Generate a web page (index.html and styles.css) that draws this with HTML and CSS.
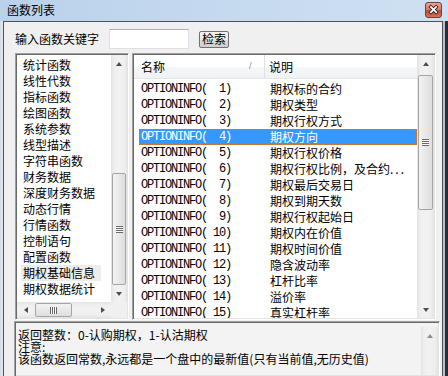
FILE: index.html
```html
<!DOCTYPE html>
<html>
<head>
<meta charset="utf-8">
<title>函数列表</title>
<link rel="stylesheet" href="styles.css">
</head>
<body>
<div class="window">
  <div class="titlebar">
    <span class="title">函数列表</span>
    <div class="close-btn">
      <svg width="17" height="16" viewBox="0 0 17 16">
        <path d="M5.5 4.5 L11.5 10.5 M11.5 4.5 L5.5 10.5" stroke="#3b2320" stroke-width="4" stroke-linecap="square"/>
        <path d="M5.5 4.5 L11.5 10.5 M11.5 4.5 L5.5 10.5" stroke="#ffffff" stroke-width="2" stroke-linecap="square"/>
      </svg>
    </div>
  </div>

  <div class="client">
    <div class="search-row">
      <span class="search-label">输入函数关键字</span>
      <input class="search-input" type="text">
      <button class="search-btn">检索</button>
    </div>

    <div class="panes">
      <!-- category list -->
      <div class="cat-box">
        <div class="cat-main">
          <ul class="cat-list">
            <li><span>统计函数</span></li>
            <li><span>线性代数</span></li>
            <li><span>指标函数</span></li>
            <li><span>绘图函数</span></li>
            <li><span>系统参数</span></li>
            <li><span>线型描述</span></li>
            <li><span>字符串函数</span></li>
            <li><span>财务数据</span></li>
            <li><span>深度财务数据</span></li>
            <li><span>动态行情</span></li>
            <li><span>行情函数</span></li>
            <li><span>控制语句</span></li>
            <li><span>配置函数</span></li>
            <li><span class="current">期权基础信息</span></li>
            <li><span>期权数据统计</span></li>
          </ul>
          <div class="vscroll cat-vscroll">
            <div class="sb-btn"><i class="arrow-up"></i></div>
            <div class="sb-track">
              <div class="thumb-v"><i class="grip-v"></i></div>
            </div>
            <div class="sb-btn"><i class="arrow-down"></i></div>
          </div>
        </div>
        <div class="cat-bottom">
          <div class="hscroll">
            <div class="sb-btn-h"><i class="arrow-left"></i></div>
            <div class="sb-track-h">
              <div class="thumb-h"><i class="grip-h"></i></div>
            </div>
            <div class="sb-btn-h"><i class="arrow-right"></i></div>
          </div>
          <div class="corner"></div>
        </div>
      </div>

      <!-- function list -->
      <div class="func-box">
        <div class="func-view">
          <div class="func-header">
            <div class="hd-name">名称<span class="sort-mark">/</span></div>
            <div class="hd-desc">说明</div>
          </div>
          <div class="func-rows">
            <div class="row"><span class="c-name">OPTIONINFO(  1)</span><span class="c-desc">期权标的合约</span></div>
            <div class="row"><span class="c-name">OPTIONINFO(  2)</span><span class="c-desc">期权类型</span></div>
            <div class="row"><span class="c-name">OPTIONINFO(  3)</span><span class="c-desc">期权行权方式</span></div>
            <div class="row selected"><span class="c-name">OPTIONINFO(  4)</span><span class="c-desc">期权方向</span></div>
            <div class="row"><span class="c-name">OPTIONINFO(  5)</span><span class="c-desc">期权行权价格</span></div>
            <div class="row"><span class="c-name">OPTIONINFO(  6)</span><span class="c-desc">期权行权比例，及合约<span class="dots">...</span></span></div>
            <div class="row"><span class="c-name">OPTIONINFO(  7)</span><span class="c-desc">期权最后交易日</span></div>
            <div class="row"><span class="c-name">OPTIONINFO(  8)</span><span class="c-desc">期权到期天数</span></div>
            <div class="row"><span class="c-name">OPTIONINFO(  9)</span><span class="c-desc">期权行权起始日</span></div>
            <div class="row"><span class="c-name">OPTIONINFO( 10)</span><span class="c-desc">期权内在价值</span></div>
            <div class="row"><span class="c-name">OPTIONINFO( 11)</span><span class="c-desc">期权时间价值</span></div>
            <div class="row"><span class="c-name">OPTIONINFO( 12)</span><span class="c-desc">隐含波动率</span></div>
            <div class="row"><span class="c-name">OPTIONINFO( 13)</span><span class="c-desc">杠杆比率</span></div>
            <div class="row"><span class="c-name">OPTIONINFO( 14)</span><span class="c-desc">溢价率</span></div>
            <div class="row"><span class="c-name">OPTIONINFO( 15)</span><span class="c-desc">真实杠杆率</span></div>
          </div>
        </div>
        <div class="vscroll func-vscroll">
          <div class="sb-btn"><i class="arrow-up"></i></div>
          <div class="sb-track">
            <div class="thumb-v"><i class="grip-v"></i></div>
          </div>
          <div class="sb-btn"><i class="arrow-down"></i></div>
        </div>
      </div>
    </div>

    <!-- description -->
    <div class="desc-box">
      <div class="desc-text">
        <div>返回整数：0-认购期权，1-认沽期权</div>
        <div>注意:</div>
        <div>该函数返回常数,永远都是一个盘中的最新值(只有当前值,无历史值)</div>
      </div>
      <div class="vscroll desc-vscroll">
        <div class="sb-btn"><i class="arrow-up light"></i></div>
        <div class="sb-track plain"></div>
      </div>
    </div>
  </div>
</div>
</body>
</html>
```

FILE: styles.css
```css
html, body {
  margin: 0;
  padding: 0;
}

body {
  width: 448px;
  height: 376px;
  overflow: hidden;
  font-family: "Noto Sans CJK SC", "Liberation Sans", sans-serif;
  font-size: 12px;
  color: #000;
  background: #2b2f35;
}

.window {
  width: 443px;
  height: 376px;
  display: flex;
  flex-direction: column;
  background: linear-gradient(to right, #d3dbe3, #dfe5eb 2px, #c9d3dd);
  border-right: 2px solid #b7c2cc;
}

/* title bar */

.titlebar {
  height: 21px;
  flex: none;
  display: flex;
  align-items: center;
  justify-content: space-between;
  padding: 0 6px 0 7px;
  background: linear-gradient(to right, #b9d1ea, #c4d9ef 45%, #cfe0f2);
  margin-right: -5px;
}

.title {
  line-height: 14px;
  margin-top: -1px;
}

.close-btn {
  width: 17px;
  height: 16px;
  margin-top: -1px;
  border: 1px solid #7a3b33;
  border-radius: 3px;
  background: linear-gradient(to bottom, #e8a596, #d7806f 45%, #c24a35 55%, #d0735e);
  box-sizing: border-box;
  display: flex;
  align-items: center;
  justify-content: center;
}

.close-btn svg {
  display: block;
  margin-top: -1px;
}

/* client area */

.client {
  flex: 1;
  margin-left: 3px;
  border: 1px solid #4e5258;
  border-bottom: none;
  background: #f0f0f0;
  display: flex;
  flex-direction: column;
  min-height: 0;
}

.search-row {
  display: flex;
  align-items: center;
  height: 20px;
  margin-top: 7px;
  padding-left: 11px;
}

.search-label {
  line-height: 14px;
}

.search-input {
  width: 80px;
  height: 20px;
  box-sizing: border-box;
  margin: 0 0 0 10px;
  padding: 0;
  border: 1px solid #dbdfe6;
  border-top-color: #abadb3;
  background: #fff;
}

.search-btn {
  width: 30px;
  height: 17px;
  margin-left: 10px;
  padding: 0;
  box-sizing: border-box;
  border: 1px solid #707070;
  border-radius: 2px;
  background: linear-gradient(to bottom, #f2f2f2, #ebebeb 50%, #dddddd 51%, #cfcfcf);
  font-family: "Noto Sans CJK SC", sans-serif;
  font-size: 12px;
  line-height: 14px;
  color: #000;
}

.panes {
  display: flex;
  margin-top: 4px;
  padding-left: 11px;
  height: 267px;
  flex: none;
}

/* sunken boxes */

.cat-box,
.func-box,
.desc-box {
  box-sizing: border-box;
  border: 1px solid;
  border-color: #a0a0a0 #ffffff #ffffff #a0a0a0;
  box-shadow: inset 1px 1px 0 #696969, inset -1px -1px 0 #e3e3e3;
  background: #fff;
}

.cat-box {
  width: 114px;
  height: 100%;
  padding: 1px;
  display: flex;
  flex-direction: column;
}

.cat-main {
  flex: 1;
  display: flex;
  min-height: 0;
}

.cat-list {
  flex: 1;
  list-style: none;
  margin: 0;
  padding: 2px 0 0 4px;
  overflow: hidden;
}

.cat-list li {
  height: 16px;
  line-height: 16px;
  white-space: nowrap;
}

.cat-list span {
  display: inline-block;
  padding: 0 6px 0 2px;
}

.cat-list .current {
  background: #ececec;
}

.cat-bottom {
  height: 16px;
  display: flex;
  flex: none;
}

.corner {
  width: 16px;
  background: #f0f0f0;
}

.func-box {
  width: 304px;
  height: 100%;
  margin-left: 3px;
  padding: 1px;
  display: flex;
}

.func-view {
  flex: 1;
  overflow: hidden;
}

.func-header {
  display: flex;
  height: 24px;
  box-sizing: border-box;
  border-bottom: 1px solid #e5e5e5;
  background: linear-gradient(to bottom, #ffffff, #ffffff 50%, #f5f6f7 51%, #f1f2f4);
  line-height: 23px;
}

.hd-name {
  width: 131px;
  box-sizing: border-box;
  padding-left: 7px;
  border-right: 1px solid #dde0e4;
  position: relative;
}

.sort-mark {
  position: absolute;
  left: 115px;
  top: 0;
  font-family: "Liberation Sans", sans-serif;
  font-size: 9px;
  color: #8a8a8a;
}

.hd-desc {
  flex: 1;
  padding-left: 4px;
}

.func-rows {
  padding-top: 2px;
}

.row {
  display: flex;
  height: 16px;
  line-height: 16px;
  margin-left: 5px;
  box-sizing: border-box;
  white-space: nowrap;
}

.row.selected {
  background: #3399ff;
  color: #fff;
  outline: 1px dotted #c87a36;
  outline-offset: -1px;
}

.c-name {
  width: 131px;
  flex: none;
  padding-left: 2px;
  box-sizing: border-box;
  font-family: "Liberation Mono", monospace;
  font-size: 12px;
  letter-spacing: -1.2px;
  white-space: pre;
}

.c-desc {
  flex: 1;
}

.dots {
  letter-spacing: 2px;
}

/* scrollbars */

.vscroll {
  width: 17px;
  flex: none;
  display: flex;
  flex-direction: column;
  background: linear-gradient(to right, #e3e3e3, #eeeeee 3px, #f2f2f2 50%, #eeeeee 14px, #e3e3e3);
}

.cat-vscroll {
  width: 16px;
}

.sb-btn {
  height: 17px;
  flex: none;
  display: flex;
  align-items: center;
  justify-content: center;
}

.sb-track {
  flex: 1;
  min-height: 0;
}

.thumb-v {
  margin: 0 1px;
  box-sizing: border-box;
  border: 1px solid #a5a5a5;
  border-radius: 2px;
  background: linear-gradient(to right, #f3f3f3, #e8e8e8 50%, #dedede);
  display: flex;
  align-items: center;
  justify-content: center;
}

.cat-vscroll .thumb-v {
  margin-top: 101px;
  height: 112px;
}

.func-vscroll .thumb-v {
  margin-top: 3px;
  height: 135px;
}

.grip-v {
  width: 7px;
  height: 7px;
  background: repeating-linear-gradient(to bottom, #6a6a6a 0, #6a6a6a 1px, #fafafa 1px, #fafafa 2px);
}

.hscroll {
  flex: 1;
  display: flex;
  background: linear-gradient(to bottom, #e3e3e3, #eeeeee 3px, #f2f2f2 50%, #eeeeee 13px, #e3e3e3);
}

.sb-btn-h {
  width: 17px;
  flex: none;
  display: flex;
  align-items: center;
  justify-content: center;
}

.sb-track-h {
  flex: 1;
}

.thumb-h {
  width: 37px;
  height: 14px;
  margin: 1px 0 0 1px;
  box-sizing: border-box;
  border: 1px solid #a5a5a5;
  border-radius: 2px;
  background: linear-gradient(to bottom, #f3f3f3, #e8e8e8 50%, #dedede);
  display: flex;
  align-items: center;
  justify-content: center;
}

.grip-h {
  width: 7px;
  height: 7px;
  background: repeating-linear-gradient(to right, #6a6a6a 0, #6a6a6a 1px, #fafafa 1px, #fafafa 2px);
}

.arrow-up,
.arrow-down,
.arrow-left,
.arrow-right {
  display: block;
  width: 0;
  height: 0;
  border-style: solid;
}

.arrow-up {
  border-width: 0 3.5px 4px 3.5px;
  border-color: transparent transparent #4d4d4d transparent;
}

.arrow-up.light {
  border-bottom-color: #8e8e8e;
}

.arrow-down {
  border-width: 4px 3.5px 0 3.5px;
  border-color: #4d4d4d transparent transparent transparent;
}

.arrow-left {
  border-width: 3.5px 4px 3.5px 0;
  border-color: transparent #4d4d4d transparent transparent;
}

.arrow-right {
  border-width: 3.5px 0 3.5px 4px;
  border-color: transparent transparent transparent #4d4d4d;
}

/* description */

.desc-box {
  flex: 1;
  margin: 1px 2px 0 10px;
  padding: 1px;
  display: flex;
  background: #f3f3f3;
  border-bottom: none;
}

.desc-text {
  flex: 1;
  padding: 5.5px 0 0 2px;
  line-height: 12px;
  white-space: nowrap;
  overflow: hidden;
}

.desc-vscroll {
  margin-top: 4px;
}

.sb-track.plain {
  background: transparent;
}
```
